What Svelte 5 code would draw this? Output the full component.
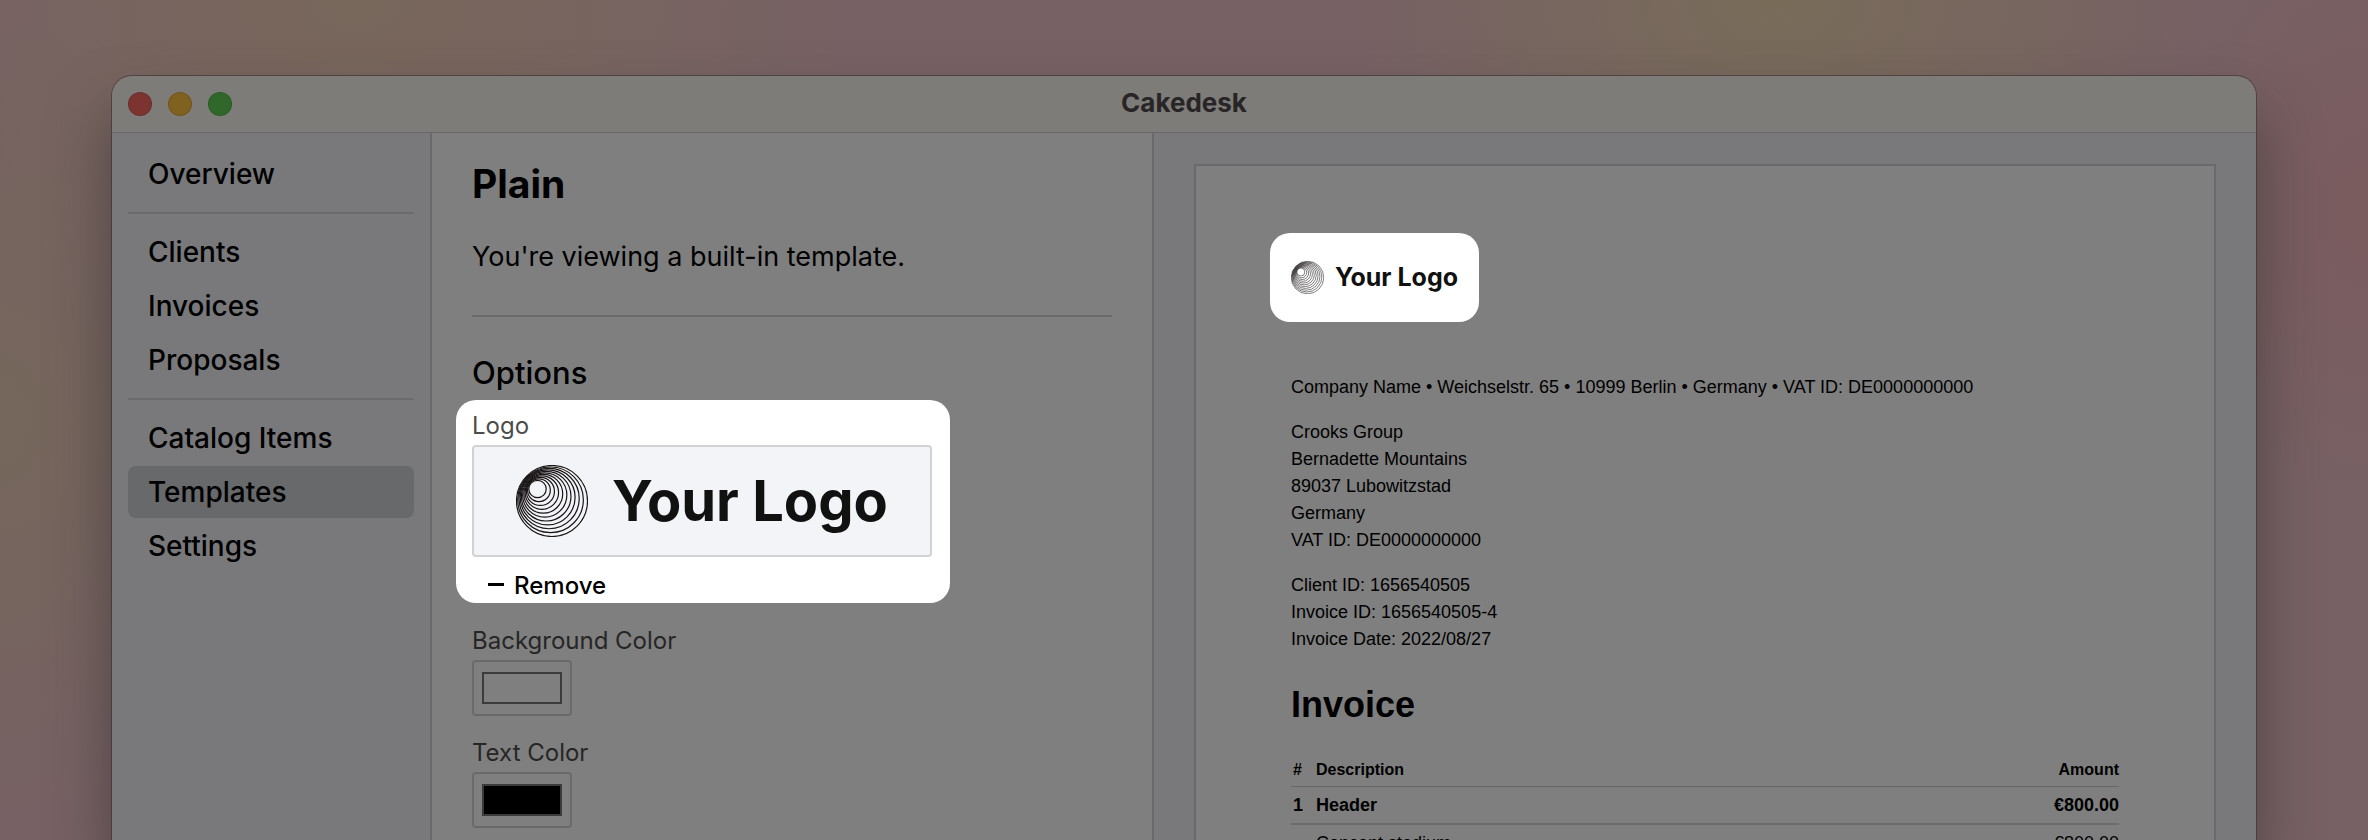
<script>
  const navGroups = [
    ['Overview'],
    ['Clients', 'Invoices', 'Proposals'],
    ['Catalog Items', 'Templates', 'Settings']
  ];

  const ringCount = 11;
  const rings = Array.from({ length: ringCount }, (_, i) => {
    const t = i / (ringCount - 1);
    return {
      cx: 21.5 + 14.5 * t,
      cy: 24 + 12 * t,
      r: 8.7 + 26.8 * t
    };
  });

  const client = [
    'Crooks Group',
    'Bernadette Mountains',
    '89037 Lubowitzstad',
    'Germany',
    'VAT ID: DE0000000000'
  ];

  const details = [
    'Client ID: 1656540505',
    'Invoice ID: 1656540505-4',
    'Invoice Date: 2022/08/27'
  ];

  let active = $state('Templates');
  let background = $state('#7f7f7f');
  let text = $state('#000000');
</script>

{#snippet logo(size)}
  <div class="logo {size}">
    <svg viewBox="0 0 72 72" aria-hidden="true">
      {#each rings as ring}
        <circle cx={ring.cx} cy={ring.cy} r={ring.r} />
      {/each}
    </svg>
    <span>Your Logo</span>
  </div>
{/snippet}

<div class="desktop">
  <div class="window">
    <header class="titlebar">
      <div class="lights">
        <button class="light close" aria-label="Close"></button>
        <button class="light minimize" aria-label="Minimize"></button>
        <button class="light zoom" aria-label="Zoom"></button>
      </div>
      <div class="title">Cakedesk</div>
    </header>

    <div class="body">
      <nav class="sidebar">
        {#each navGroups as group}
          <ul>
            {#each group as item}
              <li>
                <a href="#top" class:active={active === item} onclick={() => (active = item)}>{item}</a>
              </li>
            {/each}
          </ul>
        {/each}
      </nav>

      <main class="editor">
        <h1>Plain</h1>
        <p class="intro">You're viewing a built-in template.</p>
        <hr />
        <h2>Options</h2>

        <section class="logo-option">
          <div class="label">Logo</div>
          <div class="logo-field">{@render logo('large')}</div>
          <button class="remove">
            <svg viewBox="0 0 16 4" aria-hidden="true"><rect width="16" height="3" /></svg>
            Remove
          </button>
        </section>

        <div class="color-option">
          <label class="label" for="background-color">Background Color</label>
          <input id="background-color" type="color" bind:value={background} />
        </div>
        <div class="color-option">
          <label class="label" for="text-color">Text Color</label>
          <input id="text-color" type="color" bind:value={text} />
        </div>
      </main>

      <div class="preview">
        <article class="paper">
          <div class="logo-highlight">{@render logo('small')}</div>
          <p>Company Name • Weichselstr. 65 • 10999 Berlin • Germany • VAT ID: DE0000000000</p>
          <p>
            {#each client as line}{line}<br />{/each}
          </p>
          <p>
            {#each details as line}{line}<br />{/each}
          </p>
          <h2>Invoice</h2>
          <table>
            <thead>
              <tr>
                <th class="number">#</th>
                <th>Description</th>
                <th class="amount">Amount</th>
              </tr>
            </thead>
            <tbody>
              <tr class="group">
                <td>1</td>
                <td>Header</td>
                <td class="amount">€800.00</td>
              </tr>
              <tr>
                <td></td>
                <td>Concept stadium</td>
                <td class="amount">€800.00</td>
              </tr>
            </tbody>
          </table>
        </article>
      </div>
    </div>
  </div>
</div>

<style>
  :global(body) {
    margin: 0;
  }

  .desktop {
    box-sizing: border-box;
    height: 100vh;
    padding: 76px 112px 0;
    overflow: hidden;
    font-family: Inter, sans-serif;
    color: #000;
    background:
      radial-gradient(ellipse 420px 300px at 75% 0, #786c59, transparent),
      radial-gradient(ellipse 500px 360px at 15% 0, #78675b, transparent),
      radial-gradient(ellipse 260px 400px at 0 50%, #75675b, transparent),
      radial-gradient(ellipse 200px 300px at 100% 25%, #7a5b5e, transparent),
      #776164;
  }

  .window {
    display: flex;
    flex-direction: column;
    height: 100%;
    border-radius: 20px 20px 0 0;
    overflow: hidden;
    box-shadow:
      0 0 0 1px rgba(50, 35, 40, 0.5),
      0 36px 60px rgba(40, 35, 35, 0.5);
  }

  .titlebar {
    position: relative;
    display: grid;
    grid-template-columns: 1fr auto 1fr;
    align-items: center;
    height: 56px;
    flex-shrink: 0;
    background: #7e7c79;
    box-shadow: 0 1px #68676a;
  }

  .lights {
    display: flex;
    gap: 16px;
    padding-left: 16px;
  }

  .light {
    width: 24px;
    height: 24px;
    padding: 0;
    border: 1px solid rgba(0, 0, 0, 0.12);
    border-radius: 50%;
  }

  .close {
    background: #7b3430;
  }

  .minimize {
    background: #806120;
  }

  .zoom {
    background: #2f682a;
  }

  .title {
    padding-bottom: 4px;
    font-size: 26px;
    font-weight: 700;
    color: #272525;
  }

  .body {
    display: grid;
    grid-template-columns: 320px 722px 1fr;
    flex: 1;
    min-height: 0;
  }

  .sidebar {
    padding: 16px;
    border-right: 2px solid #6a6a6d;
    background: #79797b;
  }

  .sidebar ul {
    display: flex;
    flex-direction: column;
    gap: 2px;
    margin: 0;
    padding: 0;
    list-style: none;
  }

  .sidebar ul + ul {
    margin-top: 12px;
    padding-top: 12px;
    border-top: 2px solid #6a6b6d;
  }

  .sidebar a {
    display: block;
    padding: 0 20px;
    border-radius: 8px;
    font-size: 28px;
    font-weight: 500;
    line-height: 52px;
    color: #000;
    text-decoration: none;
  }

  .sidebar a.active {
    background: #67696b;
  }

  .editor {
    padding: 28px 40px 0;
    border-right: 2px solid #6a6a6d;
    background: #7f7f7f;
  }

  .editor h1 {
    margin: 0;
    font-size: 39px;
    font-weight: 700;
    line-height: 48px;
  }

  .intro {
    margin: 28px 0 37px;
    font-size: 27px;
    line-height: 42px;
  }

  hr {
    margin: 0;
    border: 0;
    border-top: 2px solid #6a6a6a;
  }

  .editor h2 {
    margin: 36px 0 7px;
    font-size: 31px;
    font-weight: 500;
    line-height: 40px;
  }

  .label {
    display: block;
    margin-bottom: 1px;
    font-size: 24px;
    line-height: 36px;
    color: #262626;
  }

  .logo-option {
    width: 462px;
    margin: 0 -16px 20px;
    padding: 8px 16px 0;
    border-radius: 20px;
    background: #fff;
  }

  .logo-option .label {
    color: #4c4c4c;
  }

  .logo-field {
    display: flex;
    align-items: center;
    justify-content: center;
    box-sizing: border-box;
    width: 460px;
    height: 112px;
    border: 2px solid #d1d2d4;
    border-radius: 4px;
    background: #f3f4f7;
  }

  .logo {
    display: flex;
    align-items: center;
    font-weight: 700;
    color: #111;
    white-space: nowrap;
  }

  .logo circle {
    fill: none;
    stroke: #191516;
    stroke-width: 1.2;
  }

  .large {
    gap: 24px;
    font-size: 56px;
  }

  .large svg {
    width: 72px;
    height: 72px;
  }

  .small {
    gap: 11px;
    font-size: 25px;
  }

  .small svg {
    width: 33px;
    height: 33px;
  }

  .remove {
    display: flex;
    align-items: center;
    gap: 10px;
    height: 46px;
    padding: 10px 16px 0;
    border: 0;
    background: none;
    font-family: inherit;
    font-size: 24px;
    font-weight: 500;
    color: #000;
  }

  .remove svg {
    width: 16px;
    height: 4px;
  }

  .color-option {
    margin-bottom: 19px;
  }

  input[type='color'] {
    display: block;
    box-sizing: border-box;
    width: 100px;
    height: 56px;
    padding: 10px 8px;
    border: 2px solid #6a6a6a;
    border-radius: 4px;
    background: none;
  }

  input::-webkit-color-swatch-wrapper {
    padding: 0;
  }

  input::-webkit-color-swatch {
    border: 2px solid #3b3b3b;
    border-radius: 0;
  }

  .preview {
    padding: 32px 40px 0;
    background: #79797b;
  }

  .paper {
    padding: 67px 95px 0;
    border: 2px solid #6a6a6d;
    background: #7f7f7f;
    font-family: 'Liberation Sans', Arial, sans-serif;
    font-size: 18px;
    line-height: 27px;
  }

  .logo-highlight {
    display: flex;
    align-items: center;
    justify-content: center;
    width: 209px;
    height: 89px;
    margin: 0 -21px 52px;
    border-radius: 20px;
    background: #fff;
    font-family: Inter, sans-serif;
  }

  .paper p {
    margin: 0 0 18px;
  }

  .paper h2 {
    margin: 30px 0 27px;
    font-size: 36px;
    line-height: 44px;
  }

  table {
    width: 100%;
    border-collapse: collapse;
  }

  th {
    padding: 5px 0;
    border-bottom: 1px solid #666;
    font-size: 16px;
    line-height: 22px;
    text-align: left;
  }

  td {
    padding: 5px 0 4px;
    border-bottom: 2px solid #6c6c6c;
  }

  th:first-child,
  td:first-child {
    width: 23px;
    padding-left: 2px;
  }

  .group td {
    font-weight: 700;
  }

  th.amount,
  td.amount {
    text-align: right;
  }
</style>
